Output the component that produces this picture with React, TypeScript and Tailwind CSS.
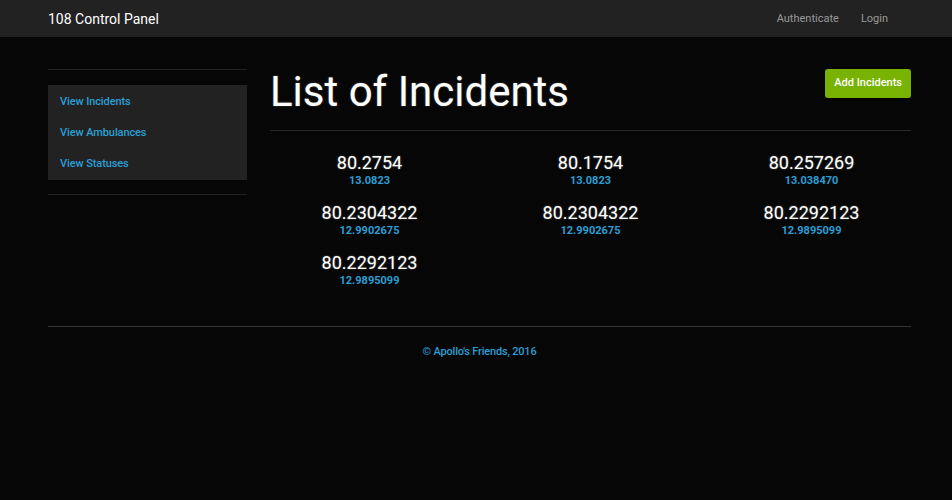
import React from "react";

const incidents = [
  { lng: "80.2754", lat: "13.0823" },
  { lng: "80.1754", lat: "13.0823" },
  { lng: "80.257269", lat: "13.038470" },
  { lng: "80.2304322", lat: "12.9902675" },
  { lng: "80.2304322", lat: "12.9902675" },
  { lng: "80.2292123", lat: "12.9895099" },
  { lng: "80.2292123", lat: "12.9895099" },
];

const sideLinks = ["View Incidents", "View Ambulances", "View Statuses"];

export default function App() {
  return (
    <div className="min-h-[500px] bg-[#060606] font-['Roboto',sans-serif]">
      {/* navbar */}
      <nav className="h-[38px] bg-[#222222] border-b border-[#080808] flex items-center justify-between pl-[48px] pr-[64px]">
        <span className="text-[14px] text-white pt-[1px]">108 Control Panel</span>
        <div className="flex gap-[22px] text-[11px] text-[#999999] pt-[2px]">
          <span>Authenticate</span>
          <span>Login</span>
        </div>
      </nav>

      <div className="pl-[48px] pr-[41px] pt-[31px] flex gap-[23px]">
        {/* sidebar */}
        <aside className="w-[199px] shrink-0">
          <div className="h-px bg-[#222]" />
          <div className="mt-[15px] bg-[#222222] pt-[2px]">
            {sideLinks.map((l) => (
              <div key={l} className="h-[31px] flex items-center pl-[12px] text-[11px] tracking-[-0.1px] font-medium text-[#2a9fd6]">
                {l}
              </div>
            ))}
          </div>
          <div className="mt-[14px] h-px bg-[#222]" />
        </aside>

        {/* main */}
        <main className="flex-1">
          <div className="flex items-start justify-between h-[61px]">
            <h1 className="mt-[-1px] text-[42px] leading-[48px] text-white [text-shadow:0_0_2px_#555]">
              List of Incidents
            </h1>
            <button className="h-[29px] px-[9px] rounded-[3px] bg-[#77b300] text-white text-[11px] font-medium shadow-[0_1px_2px_rgba(0,0,0,0.6)]">
              Add Incidents
            </button>
          </div>
          <div className="h-px bg-[#282828]" />
          <div className="grid grid-cols-3 gap-y-[14px] pt-[21px] mx-[-11px]">
            {incidents.map((i, idx) => (
              <div key={idx} className="flex flex-col items-center">
                <span className="text-[18px] leading-[22px] text-white [text-shadow:0_0_2px_#666]">{i.lng}</span>
                <span className="text-[11px] leading-[14px] font-bold text-[#2a9fd6]">{i.lat}</span>
              </div>
            ))}
          </div>
        </main>
      </div>

      {/* footer */}
      <div className="ml-[48px] mr-[41px] mt-[38px] h-px bg-[#333]" />
      <p className="pt-[17px] pl-[7px] text-center text-[11px] tracking-[-0.2px] font-medium text-[#2a9fd6]">
        © Apollo's Friends, 2016
      </p>
    </div>
  );
}
